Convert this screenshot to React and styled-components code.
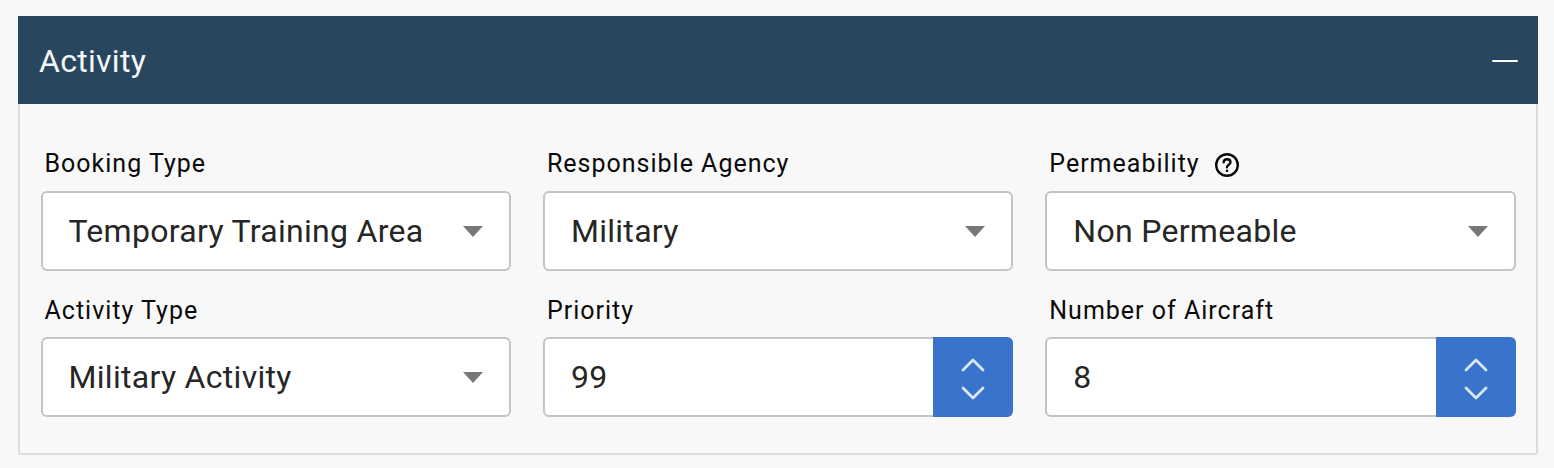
import React from 'react';
import styled, { createGlobalStyle } from 'styled-components';

const GlobalStyle = createGlobalStyle`
  html, body {
    margin: 0;
    background: #f8f8f8;
  }
  body {
    font-family: Roboto, "Liberation Sans", sans-serif;
  }
`;

const QuestionIcon = () => (
  <svg width="26" height="26" viewBox="0 0 26 26" fill="none" stroke="#0a0a0a" strokeWidth="2.4" strokeLinecap="round">
    <circle cx="13" cy="13" r="10.8" />
    <path d="M9.6 10.4c.2-2 1.6-3.1 3.5-3.1 2 0 3.4 1.2 3.4 2.9 0 2.6-3.5 2.6-3.5 5" />
    <path d="M13 18.8v.1" />
  </svg>
);

const Chevron = ({ up }) => (
  <svg width="24" height="14" viewBox="0 0 24 14" fill="none" stroke="#dbe6f6" strokeWidth="2.8" strokeLinecap="round" strokeLinejoin="round">
    <path d={up ? 'M2 12 12 2l10 10' : 'M2 2l10 10L22 2'} />
  </svg>
);

const Field = ({ label, help, value, number, lower }) => (
  <S_Field $lower={lower}>
    <S_Label>
      {label}
      {help && <S_Help><QuestionIcon /></S_Help>}
    </S_Label>
    <S_Control>
      <S_Value>{value}</S_Value>
      {number ? (
        <S_Stepper>
          <Chevron up />
          <Chevron />
        </S_Stepper>
      ) : (
        <S_Caret />
      )}
    </S_Control>
  </S_Field>
);

const App = () => {
  return (
    <S_Page>
      <GlobalStyle />
      <S_Panel>
        <S_Header>
          <S_Title>Activity</S_Title>
          <S_Collapse />
        </S_Header>
        <S_Body>
          <Field label="Booking Type" value="Temporary Training Area" />
          <Field label="Responsible Agency" value="Military" />
          <Field label="Permeability" help value="Non Permeable" />
          <Field label="Activity Type" value="Military Activity" lower />
          <Field label="Priority" value="99" number lower />
          <Field label="Number of Aircraft" value="8" number lower />
        </S_Body>
      </S_Panel>
    </S_Page>
  );
};

export default App;

const S_Page = styled.div`
  box-sizing: border-box;
  height: 468px;
  padding: 16px 16px 0 18px;
`;

const S_Panel = styled.section`
  box-sizing: border-box;
  height: 439px;
  border: 2px solid #dcdcdc;
  border-top: 0;
  border-radius: 0 0 3px 3px;
`;

const S_Header = styled.header`
  box-sizing: border-box;
  height: 88px;
  margin: 0 -2px;
  padding: 2px 20px 0 21px;
  display: flex;
  align-items: center;
  justify-content: space-between;
  background: #28475f;
`;

const S_Title = styled.h2`
  margin: 0;
  font-size: 32px;
  font-weight: 400;
  letter-spacing: 0.3px;
  color: #f4f6f8;
`;

const S_Collapse = styled.span`
  width: 26px;
  height: 2px;
  border-radius: 1px;
  background: #fff;
`;

const S_Body = styled.div`
  display: grid;
  grid-template-columns: repeat(3, 470.3px);
  column-gap: 32.1px;
  row-gap: 22.5px;
  padding: 42.3px 0 0 20.5px;
`;

const S_Field = styled.div`
  display: flex;
  flex-direction: column;
  gap: ${({ $lower }) => ($lower ? '10px' : '11px')};
`;

const S_Label = styled.label`
  display: flex;
  align-items: center;
  height: 34px;
  padding-left: 4px;
  font-size: 25px;
  letter-spacing: 1px;
  color: #0a0a0a;
`;

const S_Help = styled.span`
  display: flex;
  margin: 4px 0 0 14px;
`;

const S_Control = styled.div`
  box-sizing: border-box;
  height: 79.5px;
  display: flex;
  align-items: center;
  padding-left: 26px;
  background: #fff;
  border: 2px solid #c4c4c4;
  border-radius: 6px;
`;

const S_Value = styled.span`
  flex: 1;
  font-size: 32px;
  letter-spacing: 0.3px;
  color: #262626;
`;

const S_Caret = styled.span`
  width: 0;
  height: 0;
  margin-right: 26px;
  border-left: 10px solid transparent;
  border-right: 10px solid transparent;
  border-top: 11px solid #777;
`;

const S_Stepper = styled.div`
  box-sizing: border-box;
  flex: none;
  width: 80px;
  height: 79.5px;
  margin: -2px -2px -2px 0;
  padding-top: 3px;
  display: flex;
  flex-direction: column;
  align-items: center;
  justify-content: center;
  gap: 14px;
  background: #3a73cc;
  border-radius: 0 6px 6px 0;
`;
